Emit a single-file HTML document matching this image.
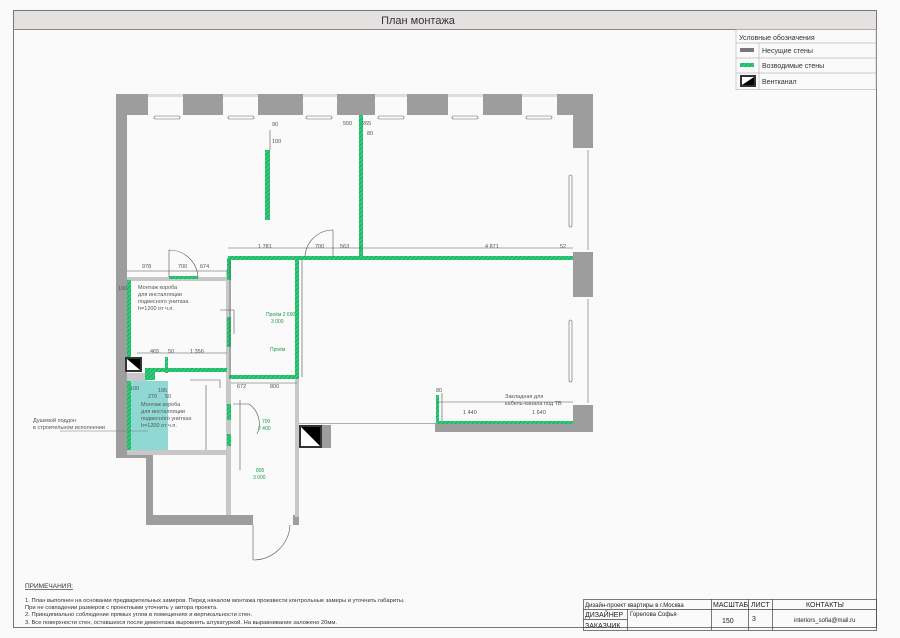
<!DOCTYPE html>
<html><head><meta charset="utf-8"><style>
html,body{margin:0;padding:0;background:#fafafa;width:900px;height:638px;overflow:hidden}
svg{display:block}
text{font-family:"Liberation Sans Narrow","Liberation Sans","DejaVu Sans",sans-serif}
</style></head><body>
<svg width="900" height="638" viewBox="0 0 900 638" xmlns="http://www.w3.org/2000/svg">
<defs>
<pattern id="h" width="3" height="3" patternUnits="userSpaceOnUse" patternTransform="rotate(45)">
<rect width="3" height="3" fill="#2ecf7a"/><rect width="1" height="3" fill="#1fa85e"/></pattern>
</defs>
<rect width="900" height="638" fill="#fafafa"/>
<!-- frame -->
<rect x="13.5" y="10.5" width="863" height="617" fill="#fafafa" stroke="#777" stroke-width="1"/>
<rect x="14" y="11" width="862" height="18" fill="#e5e1e0"/>
<line x1="13" y1="29.5" x2="876" y2="29.5" stroke="#888"/>
<text x="418" y="24" font-size="11" fill="#333" text-anchor="middle">План монтажа</text>
<!-- legend -->
<g stroke="#bbb" stroke-width="0.7" fill="none">
<rect x="736" y="29.5" width="140" height="60"/>
<line x1="736" y1="43" x2="876" y2="43"/><line x1="736" y1="58" x2="876" y2="58"/><line x1="736" y1="73" x2="876" y2="73"/>
<line x1="759" y1="43" x2="759" y2="89"/>
</g>
<text x="739" y="40" font-size="7" fill="#333">Условные обозначения</text>
<rect x="740" y="48" width="14" height="4" fill="#777"/>
<rect x="740" y="63" width="14" height="4" fill="url(#h)"/>
<rect x="740" y="75" width="16" height="12" fill="#333"/>
<polygon points="742,85 754,77 754,85" fill="#000"/><polygon points="742,77 754,77 742,85" fill="#fff"/>
<text x="762" y="53" font-size="7" fill="#333">Несущие стены</text>
<text x="762" y="68" font-size="7" fill="#333">Возводимые стены</text>
<text x="762" y="84" font-size="7" fill="#333">Вентканал</text>

<!-- bearing walls grey -->
<g fill="#9d9d9d">
<rect x="116" y="94" width="477" height="21"/>
<rect x="116" y="94" width="11" height="364"/>
<rect x="116" y="449" width="37" height="9"/>
<rect x="146" y="449" width="7" height="76"/>
<rect x="146" y="515" width="107" height="10"/>
<rect x="293" y="515" width="6" height="10"/>
<rect x="573" y="94" width="20" height="54"/>
<rect x="573" y="252" width="20" height="45"/>
<rect x="573" y="405" width="20" height="27"/>
<rect x="435" y="423" width="158" height="9"/>
<rect x="322" y="425" width="9" height="23"/>
</g>
<!-- windows top -->
<g fill="#fafafa">
<rect x="148" y="94" width="35" height="21"/><rect x="223" y="94" width="35" height="21"/>
<rect x="303" y="94" width="34" height="21"/><rect x="375" y="94" width="32" height="21"/>
<rect x="448" y="94" width="35" height="21"/><rect x="522" y="94" width="35" height="21"/>
<rect x="573" y="148" width="20" height="104"/><rect x="573" y="297" width="20" height="108"/>
</g>
<g fill="#ddd">
<rect x="148" y="94" width="35" height="3"/><rect x="223" y="94" width="35" height="3"/>
<rect x="303" y="94" width="34" height="3"/><rect x="375" y="94" width="32" height="3"/>
<rect x="448" y="94" width="35" height="3"/><rect x="522" y="94" width="35" height="3"/>
</g>
<g fill="none" stroke="#666" stroke-width="0.6">
<rect x="154" y="116" width="26" height="3" rx="1.5"/><rect x="228" y="116" width="26" height="3" rx="1.5"/>
<rect x="306" y="116" width="26" height="3" rx="1.5"/><rect x="378" y="116" width="26" height="3" rx="1.5"/>
<rect x="452" y="116" width="26" height="3" rx="1.5"/><rect x="526" y="116" width="26" height="3" rx="1.5"/>
<rect x="569" y="175" width="3" height="52" rx="1.5"/><rect x="569" y="320" width="3" height="62" rx="1.5"/>
<line x1="588" y1="150" x2="588" y2="250"/><line x1="588" y1="299" x2="588" y2="403"/>
<line x1="298" y1="423.5" x2="435" y2="423.5"/>
</g>
<!-- light grey partitions -->
<g fill="#c8c8c8">
<rect x="127" y="277" width="104" height="4"/>
<rect x="226" y="270" width="5" height="245"/>
<rect x="295" y="377" width="4" height="140"/>
<rect x="127" y="450" width="104" height="5"/>
<rect x="227" y="357" width="4" height="5"/>
<rect x="127" y="373" width="20" height="8"/>
</g>
<rect x="127" y="381" width="41" height="69" fill="#8fd8d3"/>
<!-- green walls -->
<g fill="url(#h)">
<rect x="228" y="256" width="345" height="4"/>
<rect x="359" y="115" width="4" height="143"/>
<rect x="295" y="258" width="4" height="121"/>
<rect x="229" y="375" width="68" height="4"/>
<rect x="227" y="258" width="4" height="22"/>
<rect x="227" y="317" width="4" height="30"/>
<rect x="127" y="280" width="4" height="77"/>
<rect x="127" y="381" width="4" height="69"/>
<rect x="147" y="368" width="80" height="4"/>
<rect x="145" y="368" width="10" height="12"/>
<rect x="165" y="357" width="3" height="16"/>
<rect x="265" y="150" width="5" height="70"/>
<rect x="436" y="395" width="3" height="29"/>
<rect x="436" y="421" width="137" height="3"/>
<rect x="227" y="404" width="4" height="16"/>
<rect x="227" y="434" width="4" height="12"/>
<rect x="169" y="276" width="29" height="3"/>
</g>
<!-- vents -->
<rect x="125" y="357" width="17" height="15" fill="#333"/><polygon points="127,359 140,359 140,370" fill="#000"/><polygon points="127,359 140,370 127,370" fill="#fff"/>
<rect x="299" y="425" width="23" height="23" fill="#333"/><polygon points="301,427 320,427 320,446" fill="#000"/><polygon points="301,427 320,446 301,446" fill="#fff"/>
<!-- doors -->
<g fill="none" stroke="#555" stroke-width="0.6">
<path d="M169 277 V250 A29 29 0 0 1 198 277"/>
<path d="M305 257 A28 28 0 0 1 333 230 V257"/>
<path d="M233 404 H249 A24 24 0 0 1 257 434"/>
<path d="M253 525 V560 M253 560 A37 37 0 0 0 290 525"/>
<!-- dimension lines -->
<path d="M228 248 H573 M127 271 H228 M230 260 V377 M137 353 H227 M231 383 H297 M240 400 V470 M302 260 V377 M270 130 V150 M442 393 V421 M436 402 H573 M206 385 V450"/>
<path d="M220 310 H234 V334 M190 380 H220 V388"/>
</g>
<g font-size="5.5" fill="#555">
<text x="258" y="248">1 781</text><text x="315" y="248">700</text><text x="340" y="248">563</text>
<text x="485" y="248">4 871</text><text x="560" y="248">52</text>
<text x="142" y="268">978</text><text x="178" y="268">700</text><text x="200" y="268">674</text>
<text x="343" y="125">500</text><text x="362" y="125">265</text><text x="367" y="135">80</text>
<text x="272" y="126">90</text><text x="272" y="143">100</text>
<text x="150" y="353">465</text><text x="168" y="353">50</text><text x="190" y="353">1 356</text>
<text x="237" y="388">672</text><text x="270" y="388">800</text>
<text x="130" y="390">100</text><text x="158" y="392">195</text><text x="148" y="398">270</text><text x="165" y="398">50</text>
<text x="118" y="290">100</text>
<text x="463" y="414">1 440</text><text x="532" y="414">1 640</text><text x="436" y="392">80</text>
<text x="505" y="398">Закладная для</text><text x="505" y="405">кабель-канала под ТВ</text>
<text x="138" y="289">Монтаж короба</text><text x="138" y="296">для инсталляции</text><text x="138" y="303">подвесного унитаза</text><text x="138" y="310">h=1200 от ч.п.</text>
<text x="141" y="406">Монтаж короба</text><text x="141" y="413">для инсталляции</text><text x="141" y="420">подвесного унитаза</text><text x="141" y="427">h=1200 от ч.п.</text>
<text x="33" y="422">Душевой поддон</text><text x="33" y="429">в строительном исполнении</text>
</g>
<g font-size="5" fill="#1a9a50">
<text x="266" y="316">Проём 2 690</text><text x="271" y="323">3 000</text>
<text x="262" y="423">700</text><text x="258" y="430">2 400</text>
<text x="256" y="472">805</text><text x="253" y="479">3 000</text>
<text x="270" y="351">Проём</text>
</g>
<line x1="60" y1="431" x2="148" y2="431" stroke="#777" stroke-width="0.5"/>
<!-- notes -->
<text x="25" y="588" font-size="6.5" fill="#333" text-decoration="underline">ПРИМЕЧАНИЯ:</text>
<g font-size="5.8" fill="#333">
<text x="25" y="602">1. План выполнен на основании предварительных замеров. Перед началом монтажа произвести контрольные замеры и уточнить габариты.</text>
<text x="25" y="609">При не совпадении размеров с проектными уточнить у автора проекта.</text>
<text x="25" y="616">2. Принципиально соблюдение прямых углов в помещениях и вертикальности стен.</text>
<text x="25" y="624">3. Все поверхности стен, оставшихся после демонтажа выровнять штукатуркой. На выравнивание заложено 20мм.</text>
</g>
<!-- stamp -->
<g stroke="#444" stroke-width="0.7" fill="none">
<rect x="583.5" y="599.5" width="293" height="31"/>
<line x1="583" y1="609.5" x2="876" y2="609.5" stroke="none"/>
<line x1="583" y1="609.5" x2="711" y2="609.5"/><line x1="748" y1="609.5" x2="773" y2="609.5"/><line x1="773" y1="609.5" x2="876" y2="609.5"/><line x1="711" y1="609.5" x2="748" y2="609.5"/>
<line x1="583" y1="619.5" x2="627" y2="619.5"/>
<line x1="627.5" y1="609" x2="627.5" y2="630"/>
<line x1="711.5" y1="599" x2="711.5" y2="630"/><line x1="748.5" y1="599" x2="748.5" y2="630"/><line x1="772.5" y1="599" x2="772.5" y2="630"/>
</g>
<g fill="#222">
<text x="585" y="607" font-size="6">Дизайн-проект квартиры в г.Москва</text>
<text x="713" y="607" font-size="7">МАСШТАБ</text><text x="751" y="607" font-size="7">ЛИСТ</text><text x="806" y="607" font-size="7">КОНТАКТЫ</text>
<text x="585" y="617" font-size="7">ДИЗАЙНЕР</text><text x="630" y="616" font-size="6">Горелова Софья</text>
<text x="585" y="628" font-size="7">ЗАКАЗЧИК</text>
<text x="722" y="623" font-size="7">150</text><text x="752" y="621" font-size="7">3</text>
<text x="794" y="622" font-size="6">interiors_sofia@mail.ru</text>
</g>
</svg>
</body></html>
